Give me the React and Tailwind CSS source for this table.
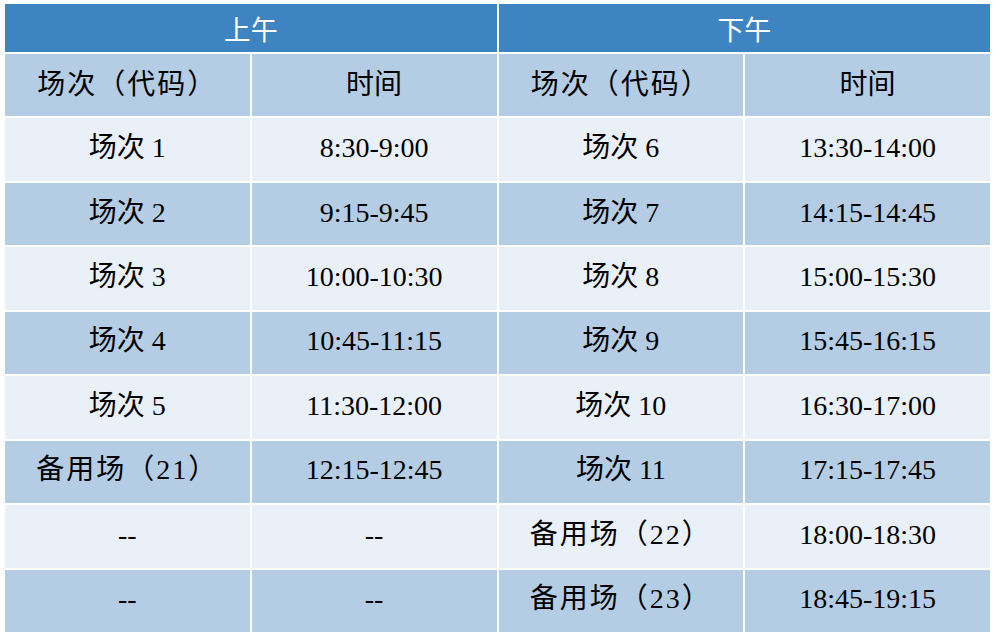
import React from "react";

const rows = [
  ["场次 1", "8:30-9:00", "场次 6", "13:30-14:00"],
  ["场次 2", "9:15-9:45", "场次 7", "14:15-14:45"],
  ["场次 3", "10:00-10:30", "场次 8", "15:00-15:30"],
  ["场次 4", "10:45-11:15", "场次 9", "15:45-16:15"],
  ["场次 5", "11:30-12:00", "场次 10", "16:30-17:00"],
  ["备用场（21）", "12:15-12:45", "场次 11", "17:15-17:45"],
  ["--", "--", "备用场（22）", "18:00-18:30"],
  ["--", "--", "备用场（23）", "18:45-19:15"],
];

export default function App() {
  return (
    <div className="w-[996px] h-[638px] bg-white pl-[5px] pt-[4px]">
      <div
        className="grid grid-cols-4 grid-rows-[48px_repeat(9,1fr)] gap-[2px] w-[985px] h-[628px] bg-white text-black text-[28px]"
        style={{ fontFamily: '"Liberation Serif", "Noto Sans CJK SC", serif' }}
      >
        <div
          className="col-span-2 flex items-center justify-center bg-[#3e83c2] text-white text-[27px] pt-[2px]"
          style={{ fontFamily: '"Noto Sans CJK SC", sans-serif' }}
        >
          上午
        </div>
        <div
          className="col-span-2 flex items-center justify-center bg-[#3e83c2] text-white text-[27px] pt-[2px]"
          style={{ fontFamily: '"Noto Sans CJK SC", sans-serif' }}
        >
          下午
        </div>

        <div className="flex items-center justify-center bg-[#b4cde5] tracking-[2px]">场次（代码）</div>
        <div className="flex items-center justify-center bg-[#b4cde5]">时间</div>
        <div className="flex items-center justify-center bg-[#b4cde5] tracking-[2px]">场次（代码）</div>
        <div className="flex items-center justify-center bg-[#b4cde5]">时间</div>

        {rows.map((row, i) =>
          row.map((cell, j) => (
            <div
              key={i + "-" + j}
              className={
                "flex items-center justify-center whitespace-pre pb-[3px] " +
                (cell.includes("（") ? "tracking-[2px] " : "") +
                (i % 2 === 0 ? "bg-[#e9f0f8]" : "bg-[#b4cde5]")
              }
            >
              {cell}
            </div>
          ))
        )}
      </div>
    </div>
  );
}
